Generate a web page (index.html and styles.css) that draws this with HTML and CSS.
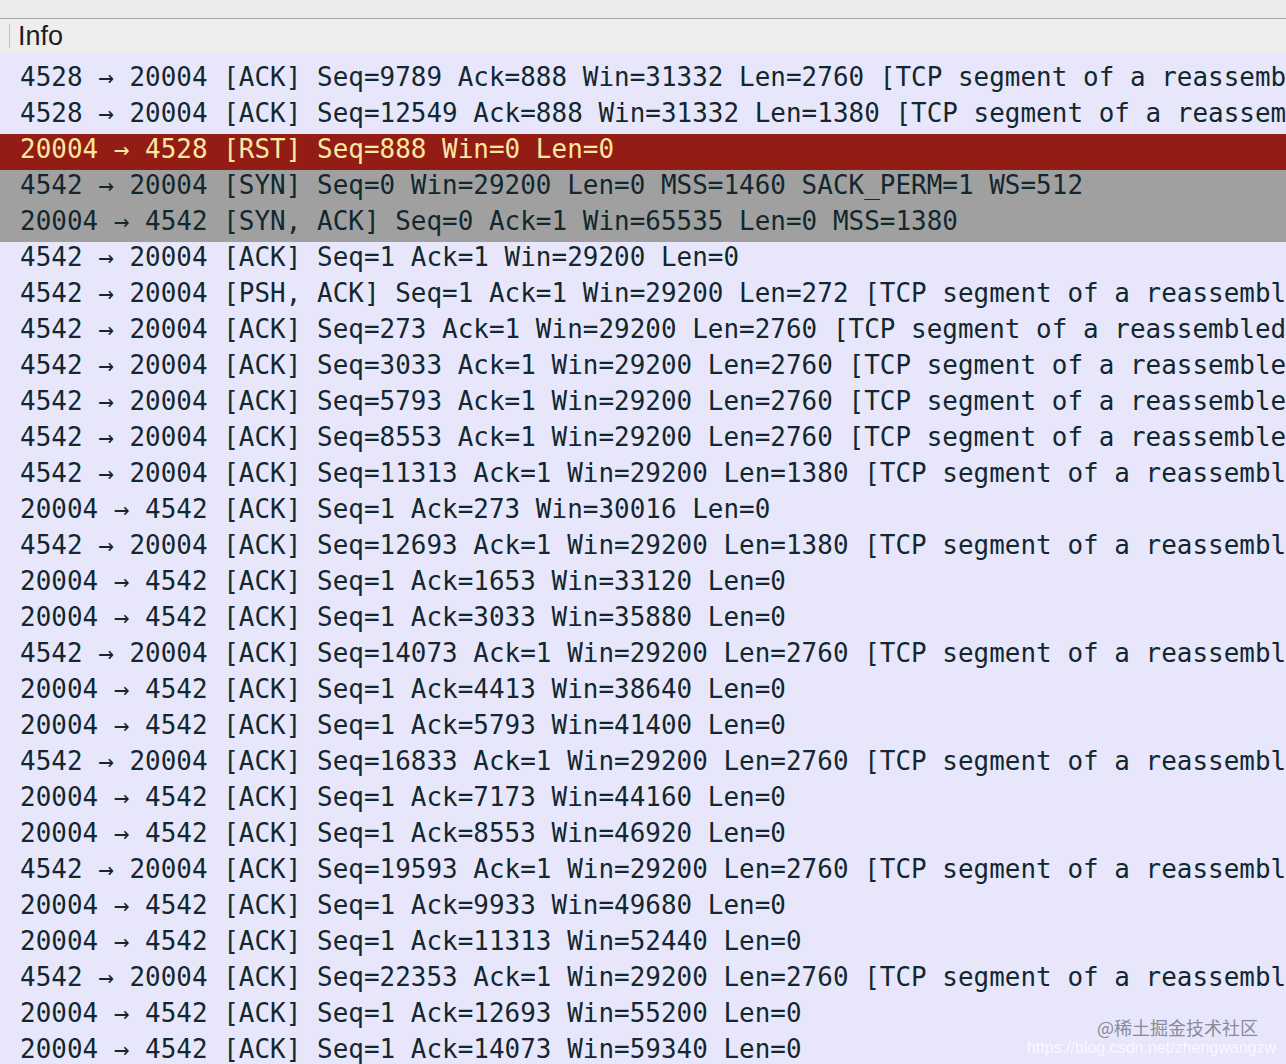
FILE: index.html
```html
<!DOCTYPE html>
<html>
<head>
<meta charset="utf-8">
<link rel="stylesheet" href="styles.css">
</head>
<body>
<div class="app">
  <div class="topbar"></div>
  <div class="header"><span class="sep"></span><span class="title">Info</span></div>
  <div class="list">
    <div class="row partial"></div>
    <div class="row">4528 → 20004 [ACK] Seq=9789 Ack=888 Win=31332 Len=2760 [TCP segment of a reassemb</div>
    <div class="row">4528 → 20004 [ACK] Seq=12549 Ack=888 Win=31332 Len=1380 [TCP segment of a reassem</div>
    <div class="row rst">20004 → 4528 [RST] Seq=888 Win=0 Len=0</div>
    <div class="row syn">4542 → 20004 [SYN] Seq=0 Win=29200 Len=0 MSS=1460 SACK_PERM=1 WS=512</div>
    <div class="row syn">20004 → 4542 [SYN, ACK] Seq=0 Ack=1 Win=65535 Len=0 MSS=1380</div>
    <div class="row">4542 → 20004 [ACK] Seq=1 Ack=1 Win=29200 Len=0</div>
    <div class="row">4542 → 20004 [PSH, ACK] Seq=1 Ack=1 Win=29200 Len=272 [TCP segment of a reassembl</div>
    <div class="row">4542 → 20004 [ACK] Seq=273 Ack=1 Win=29200 Len=2760 [TCP segment of a reassembled</div>
    <div class="row">4542 → 20004 [ACK] Seq=3033 Ack=1 Win=29200 Len=2760 [TCP segment of a reassemble</div>
    <div class="row">4542 → 20004 [ACK] Seq=5793 Ack=1 Win=29200 Len=2760 [TCP segment of a reassemble</div>
    <div class="row">4542 → 20004 [ACK] Seq=8553 Ack=1 Win=29200 Len=2760 [TCP segment of a reassemble</div>
    <div class="row">4542 → 20004 [ACK] Seq=11313 Ack=1 Win=29200 Len=1380 [TCP segment of a reassembl</div>
    <div class="row">20004 → 4542 [ACK] Seq=1 Ack=273 Win=30016 Len=0</div>
    <div class="row">4542 → 20004 [ACK] Seq=12693 Ack=1 Win=29200 Len=1380 [TCP segment of a reassembl</div>
    <div class="row">20004 → 4542 [ACK] Seq=1 Ack=1653 Win=33120 Len=0</div>
    <div class="row">20004 → 4542 [ACK] Seq=1 Ack=3033 Win=35880 Len=0</div>
    <div class="row">4542 → 20004 [ACK] Seq=14073 Ack=1 Win=29200 Len=2760 [TCP segment of a reassembl</div>
    <div class="row">20004 → 4542 [ACK] Seq=1 Ack=4413 Win=38640 Len=0</div>
    <div class="row">20004 → 4542 [ACK] Seq=1 Ack=5793 Win=41400 Len=0</div>
    <div class="row">4542 → 20004 [ACK] Seq=16833 Ack=1 Win=29200 Len=2760 [TCP segment of a reassembl</div>
    <div class="row">20004 → 4542 [ACK] Seq=1 Ack=7173 Win=44160 Len=0</div>
    <div class="row">20004 → 4542 [ACK] Seq=1 Ack=8553 Win=46920 Len=0</div>
    <div class="row">4542 → 20004 [ACK] Seq=19593 Ack=1 Win=29200 Len=2760 [TCP segment of a reassembl</div>
    <div class="row">20004 → 4542 [ACK] Seq=1 Ack=9933 Win=49680 Len=0</div>
    <div class="row">20004 → 4542 [ACK] Seq=1 Ack=11313 Win=52440 Len=0</div>
    <div class="row">4542 → 20004 [ACK] Seq=22353 Ack=1 Win=29200 Len=2760 [TCP segment of a reassembl</div>
    <div class="row">20004 → 4542 [ACK] Seq=1 Ack=12693 Win=55200 Len=0</div>
    <div class="row">20004 → 4542 [ACK] Seq=1 Ack=14073 Win=59340 Len=0</div>
  </div>
  <div class="wm">
    <div class="wm1">@稀土掘金技术社区</div>
    <div class="wm2">https://blog.csdn.net/zhengwangzw</div>
  </div>
</div>
</body>
</html>
```
FILE: styles.css
```css
html, body {
  margin: 0;
  padding: 0;
  background: #e7e6fb;
}
.app {
  position: relative;
  width: 1286px;
  height: 1064px;
  overflow: hidden;
  background: #e7e6fb;
}
.topbar {
  height: 18px;
  background: #ebebeb;
  border-bottom: 1px solid #a9a9a9;
}
.header {
  height: 34px;
  background: #eeeeee;
  display: flex;
  align-items: center;
}
.sep {
  width: 1px;
  height: 24px;
  margin-left: 9px;
  background: #c4c4c4;
}
.title {
  margin-left: 8px;
  font-family: "Liberation Sans", Arial, sans-serif;
  font-size: 27px;
  color: #1e1e1e;
  line-height: 34px;
}
.list {
  font-family: "DejaVu Sans Mono", monospace;
  font-size: 25.9px;
  letter-spacing: 0.045px;
  color: #12272e;
}
.row {
  height: 36px;
  box-sizing: border-box;
  line-height: 30px;
  padding: 0 0 6px 20px;
  white-space: pre;
  overflow: hidden;
  background: #e7e6fb;
}
.row.partial {
  height: 9px;
  padding: 0;
}
.row.rst {
  background: #931d15;
  color: #fbe9a3;
}
.row.syn {
  background: #a0a0a0;
  color: #12272e;
}
.wm {
  position: absolute;
  right: 10px;
  bottom: 6px;
  display: flex;
  flex-direction: column;
  align-items: flex-end;
}
.wm1 {
  font-family: "Noto Sans CJK SC", sans-serif;
  font-size: 18px;
  line-height: 22px;
  color: #8a8a9a;
  margin-right: 18px;
}
.wm2 {
  font-family: "Liberation Sans", Arial, sans-serif;
  font-size: 16px;
  line-height: 20px;
  color: rgba(255, 255, 255, 0.75);
}
```
